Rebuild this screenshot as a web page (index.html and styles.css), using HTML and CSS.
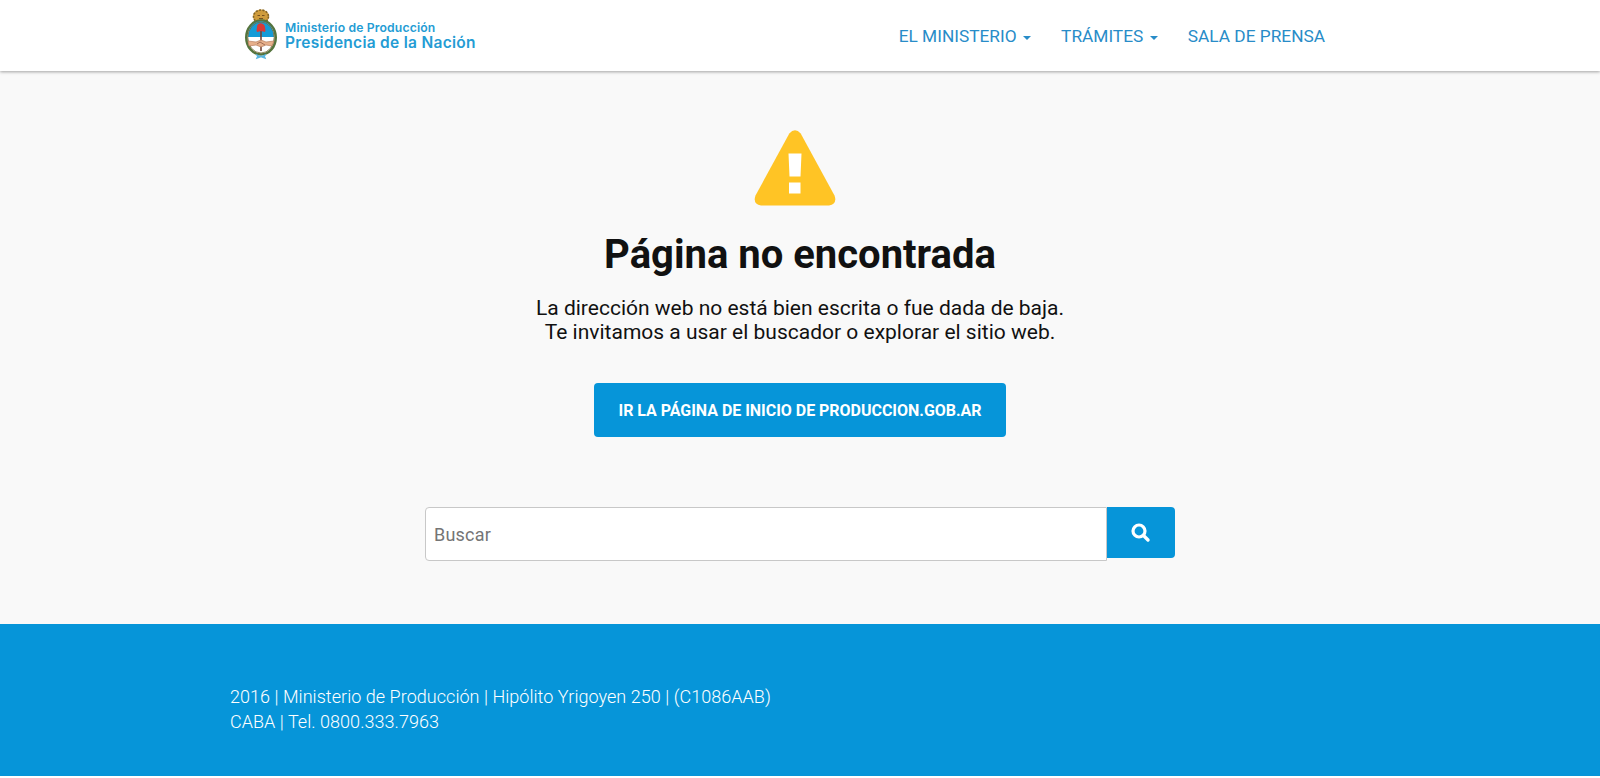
FILE: index.html
```html
<!DOCTYPE html>
<html lang="es">
<head>
<meta charset="utf-8">
<title>Página no encontrada</title>
<link rel="stylesheet" href="styles.css">
</head>
<body>
<header class="header">
  <a class="brand">
    <svg class="crest" viewBox="0 0 34 52" width="34" height="52">
      <ellipse cx="17" cy="8.500" rx="8" ry="7" fill="#cf9c3c"/>
      <ellipse cx="17" cy="8.500" rx="7.500" ry="6.500" fill="none" stroke="#806326" stroke-width="1.600" stroke-dasharray="2 1.400"/>
      <path d="M13.500 7.500h2.500M18 7.500h2.500M15 10.500h4" stroke="#76501e" fill="none"/>
      <ellipse cx="17" cy="29.500" rx="14.700" ry="17" fill="#fff" stroke="#55743e" stroke-width="2.600"/>
      <path d="M4 29C4 8 30 8 30 29Z" fill="#159bd7"/>
      <ellipse cx="17" cy="29.500" rx="13.200" ry="15.500" fill="none" stroke="#776b3a" stroke-width=".8"/>
      <path d="M17 23v20" stroke="#704438" stroke-width="1.600"/>
      <path d="M13 24c-1-2 0-3 0-5 0-5 7-5 8 0 0 2 1 3 0 5l-4-1z" fill="#d83a38"/>
      <path d="M4 33l8 1 5-2 5 2 8-1-2 5-6-1-5 2-5-2-7 1z" fill="#e7b08b" stroke="#b9805f" stroke-width=".7"/>
      <path d="M13 36l3-2 5 3" fill="none" stroke="#925d46" stroke-width=".8"/>
      <path d="M12 46.500q5 4 10 0M14 47.500l-1 2.500 4-1.500 4 1.500-1-2.500" fill="none" stroke="#58b5df" stroke-width="1.400"/>
    </svg>
    <span class="brand-text">
      <span class="brand-ministry">Ministerio de Producción</span>
      <span class="brand-nation">Presidencia de la Nación</span>
    </span>
  </a>
  <nav class="nav">
    <a class="nav-link">EL MINISTERIO<i class="caret"></i></a>
    <a class="nav-link">TRÁMITES<i class="caret"></i></a>
    <a class="nav-link">SALA DE PRENSA</a>
  </nav>
</header>
<main class="main">
  <svg class="warning" viewBox="0 0 82 76" width="82" height="76">
    <path d="M35.300 3.500Q41-3 46.700 3.500L80.500 65.500Q83.500 74 75 75.500H7Q-1.500 74 1.500 65.500Z" fill="#ffc425"/>
    <path d="M34.500 23.500h13l-1 23h-11zM35 52.500h11.500v11H35z" fill="#fff"/>
  </svg>
  <h1 class="title">Página no encontrada</h1>
  <p class="lead">La dirección web no está bien escrita o fue dada de baja.<br>Te invitamos a usar el buscador o explorar el sitio web.</p>
  <a class="home-button">IR LA PÁGINA DE INICIO DE PRODUCCION.GOB.AR</a>
  <form class="search">
    <input class="search-input" type="text" placeholder="Buscar">
    <button class="search-button" type="button" aria-label="Buscar">
      <svg viewBox="0 0 20 20" width="20" height="20"><circle cx="8" cy="8" r="6" fill="none" stroke="#fff" stroke-width="3.200"/><path d="M12.500 12.500l4.500 4.500" stroke="#fff" stroke-width="3.400" stroke-linecap="round"/></svg>
    </button>
  </form>
</main>
<footer class="footer">
  <p class="address">2016 | Ministerio de Producción | Hipólito Yrigoyen 250 | (C1086AAB)<br>CABA | Tel. 0800.333.7963</p>
</footer>
</body>
</html>
```
FILE: styles.css
```css
* { box-sizing: border-box; }
body { margin: 0; font-family: Roboto, sans-serif; color: #111; background: #fff; }
.header { position: relative; display: flex; justify-content: space-between; align-items: flex-start; height: 71px; padding: 8px 275px 0 244px; background: #fff; box-shadow: 0 1px 3px rgba(0,0,0,.35); }
.brand { display: flex; gap: 7px; }
.brand-text { display: flex; flex-direction: column; padding-top: 12px; color: #249cd4; font-family: Inter, sans-serif; white-space: nowrap; }
.brand-ministry { font-size: 12.2px; line-height: 15px; font-weight: 600; letter-spacing: .15px; }
.brand-nation { font-size: 15.5px; line-height: 15px; font-weight: 600; letter-spacing: .28px; }
.nav { display: flex; gap: 30px; padding-top: 18px; }
.nav-link { display: flex; align-items: center; font-size: 17.3px; line-height: 20px; font-weight: 400; color: #288cc8; white-space: nowrap; }
.caret { margin: 4px 0 0 6.500px; border: 4px solid transparent; border-top-color: #288cc8; border-bottom: 0; }
.main { display: flex; flex-direction: column; align-items: center; height: 553px; padding-top: 59px; background: #f9f9f9; }
.warning { margin-right: 10px; }
.title { margin: 26px 0 0; font-size: 40px; line-height: 46px; font-weight: 700; white-space: nowrap; }
.lead { margin: 18px 0 0; font-size: 21px; line-height: 24px; text-align: center; white-space: nowrap; }
.home-button { display: flex; align-items: center; justify-content: center; width: 412px; height: 54px; margin-top: 39px; border-radius: 4px; background: #0695d9; color: #fff; font-size: 16px; font-weight: 700; letter-spacing: -.03px; white-space: nowrap; }
.search { display: flex; align-items: flex-start; width: 750px; margin-top: 70px; }
.search-input { width: 682px; height: 54px; padding: 0 8px; border: 1px solid #c8c8c8; border-radius: 4px 0 0 4px; font: 18px Roboto, sans-serif; letter-spacing: .2px; background: #fff; }
.search-input::placeholder { color: #757575; opacity: 1; }
.search-button { display: flex; align-items: center; justify-content: center; width: 68px; height: 51px; padding: 0; border: 0; border-radius: 0 4px 4px 0; background: #0695d9; }
.footer { height: 152px; padding: 60px 230px; background: #0695d9; color: #fff; }
.address { margin: 0; font-size: 18px; line-height: 25px; font-weight: 300; letter-spacing: .04px; }
```
